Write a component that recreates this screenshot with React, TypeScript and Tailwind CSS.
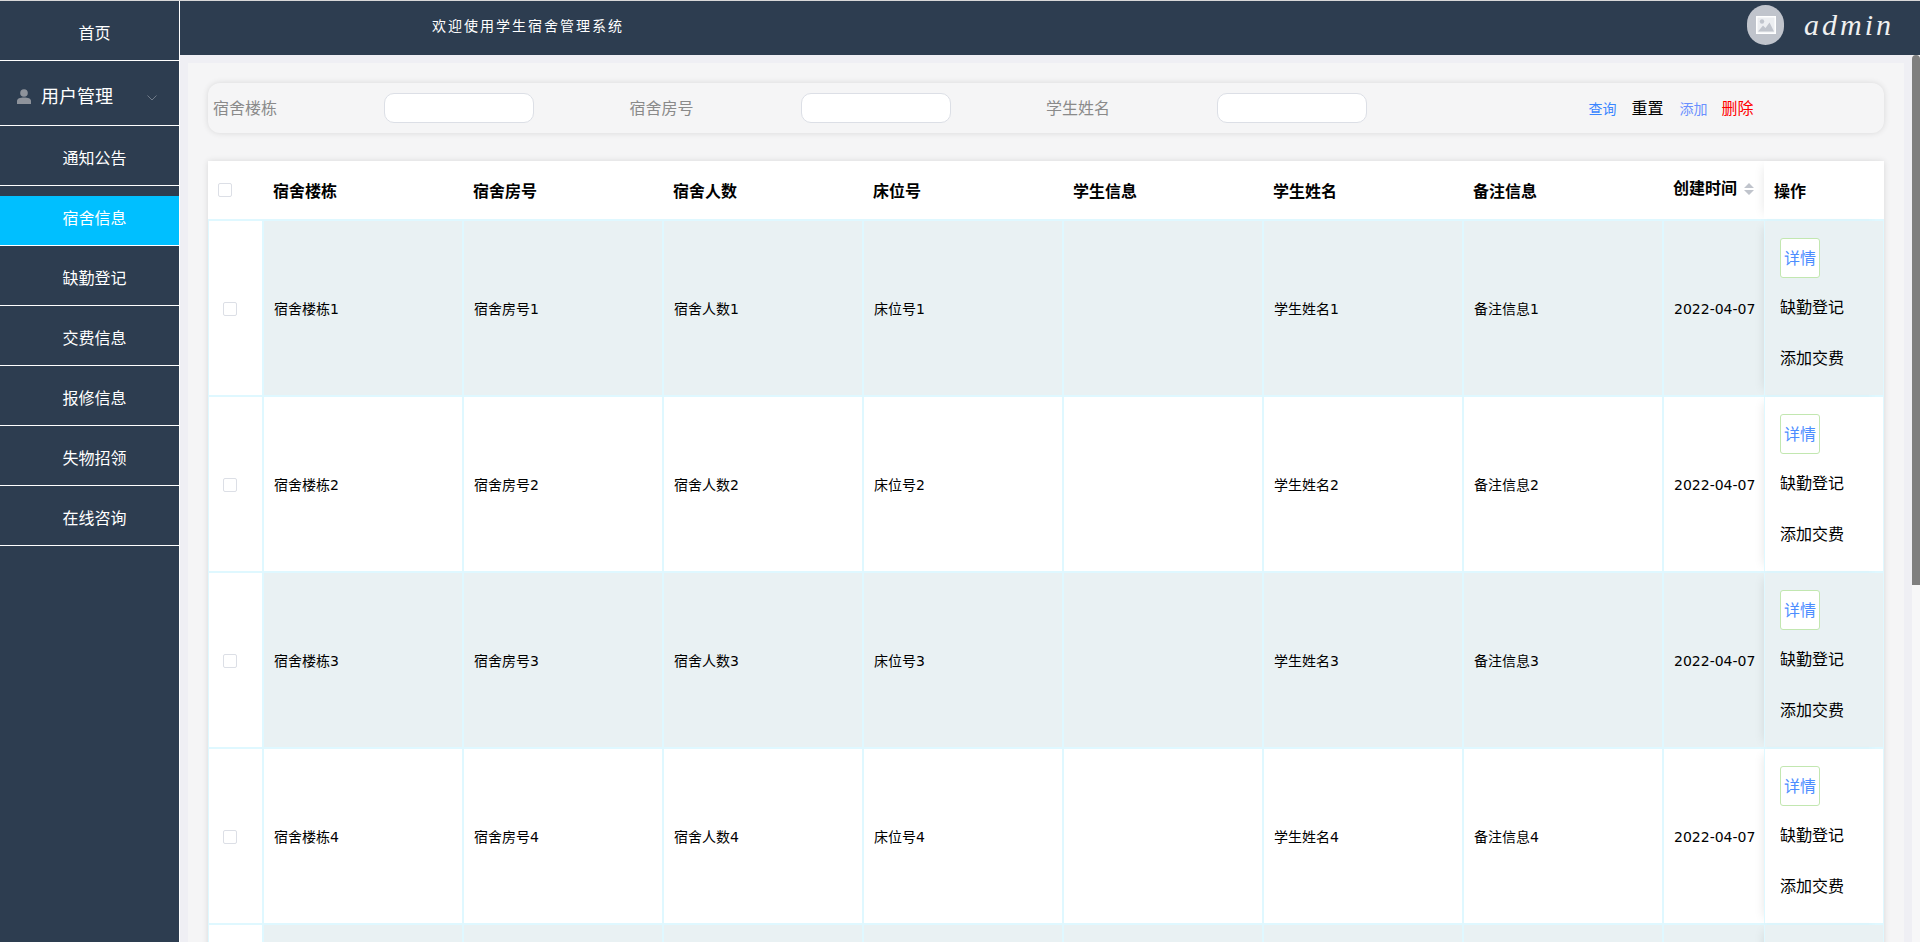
const CN = '"DejaVu Sans","Noto Sans CJK SC",sans-serif';

function NavItem({ label, active, className }: { label: string; active?: boolean; className: string }) {
  return (
    <div className={`flex items-center justify-center border-b border-white pl-[10px] text-base text-white ${active ? "bg-[#00bfff]" : ""} ${className}`}>
      {label}
    </div>
  );
}

function Filter({ label }: { label: string }) {
  return (
    <div className="flex w-[416.5px] items-center">
      <span className="w-[171px] pt-[2px] text-base text-[#8a8a8a]">{label}</span>
      <div className="h-[30px] w-[150px] rounded-[10px] border border-[#dcdfe6] bg-white" />
    </div>
  );
}

function Box() {
  return <div className="h-[14px] w-[14px] rounded-[2px] border border-[#dcdfe6] bg-white" />;
}

const heads = ["宿舍楼栋", "宿舍房号", "宿舍人数", "床位号", "学生信息", "学生姓名", "备注信息"];

function Row({ n, empty }: { n: number; empty?: boolean }) {
  const odd = n % 2 === 1;
  const bg = odd ? "bg-[#e9f1f3]" : "bg-white";
  const vals = empty
    ? ["", "", "", "", "", "", ""]
    : [`宿舍楼栋${n}`, `宿舍房号${n}`, `宿舍人数${n}`, `床位号${n}`, "", `学生姓名${n}`, `备注信息${n}`];
  return (
    <div className="flex h-[176px] shrink-0 border-t-2 border-[#dff8ff]">
      <div className="flex w-[56px] shrink-0 items-center border-l border-r-2 border-[#dff8ff] bg-white pl-[14px] pt-[2px]">
        {!empty && <Box />}
      </div>
      {vals.map((v, i) => (
        <div key={i} className={`flex w-[200px] shrink-0 items-center border-r-2 border-[#dff8ff] pl-[10px] pt-[2px] text-sm text-black ${bg}`}>
          {v}
        </div>
      ))}
      <div className={`flex w-[100px] shrink-0 items-center whitespace-nowrap pl-[10px] pt-[2px] text-sm text-black ${bg}`}>{empty ? "" : "2022-04-07"}</div>
      <div className={`relative flex w-[120px] shrink-0 flex-col items-start border-x border-[#dff8ff] pl-[15px] pt-[17px] text-base text-black shadow-[-6px_0_10px_-6px_rgba(0,0,0,0.10)] ${bg}`}>
        {!empty && (
          <>
            <div className="flex h-10 w-10 items-center justify-center rounded-[3px] border border-[#c2e7b0] bg-white pt-[2px] text-[#4c8dff]">详情</div>
            <div className="mt-[18px] leading-[24px]">缺勤登记</div>
            <div className="mt-[27px] leading-[24px]">添加交费</div>
          </>
        )}
      </div>
    </div>
  );
}

export default function App() {
  return (
    <div className="flex h-[942px] w-full overflow-hidden border-t border-[#d8d8d8] bg-[#efeff4]" style={{ fontFamily: CN }}>
      <aside className="flex h-full w-[179px] shrink-0 flex-col bg-[#2d3d50]">
        <NavItem label="首页" className="h-[60px] pt-[6px]" />
        <div className="relative flex h-[65px] items-center border-b border-white pl-[41px] pt-[7px] text-[18px] text-white">
          <svg viewBox="0 0 14 15" className="absolute left-[17px] top-[28px] h-[15px] w-[14px]" fill="#8e939b">
            <circle cx="7" cy="4" r="3.800" />
            <path d="M0 15v-3C0 9.500 3 8.500 7 8.500s7 1 7 3.500v3z" />
          </svg>
          用户管理
          <svg viewBox="0 0 10 6" className="absolute left-[147px] top-[34px] h-[6px] w-[10px]" fill="none" stroke="#6f7a88" strokeWidth="1">
            <path d="M0.500 0.500 5 5l4.500-4.500" />
          </svg>
        </div>
        <NavItem label="通知公告" className="h-[60px] pt-[7px]" />
        <NavItem label="宿舍信息" active className="mt-[10px] h-[50px] pb-[4px]" />
        {["缺勤登记", "交费信息", "报修信息", "失物招领", "在线咨询"].map((l) => (
          <NavItem key={l} label={l} className="h-[60px] pt-[7px]" />
        ))}
      </aside>
      <div className="flex min-w-0 flex-1 flex-col border-l border-white">
        <header className="relative flex h-[54px] shrink-0 items-center bg-[#2d3d50]">
          <span className="ml-[252px] -mt-[5px] text-[14px] tracking-[2px] text-white" style={{ fontFamily: '"Noto Sans CJK SC",sans-serif' }}>
            欢迎使用学生宿舍管理系统
          </span>
          <div className="absolute left-[1567px] top-[4px] flex h-10 w-[37px] items-center justify-center rounded-full bg-[#c0c4cc]">
            <svg viewBox="0 0 20 18" className="h-[18px] w-5">
              <rect width="20" height="18" fill="#fff" />
              <rect x="1.500" y="1.500" width="17" height="15" fill="#eceef1" />
              <circle cx="6" cy="5.500" r="2.200" fill="#c0c4cc" />
              <path d="M2 15.500l5-6 2.500 2.500 4-5.500 4.500 9z" fill="#c0c4cc" />
            </svg>
          </div>
          <span className="absolute left-[1624px] top-[6px] text-[30px] leading-[36px] tracking-[3px] text-[#f0f0f0] italic" style={{ fontFamily: '"Liberation Serif",cursive' }}>
            admin
          </span>
        </header>
        <div className="flex min-h-0 flex-1">
          <main className="ml-[8px] mt-[8px] min-w-0 flex-1 overflow-hidden bg-[#f5f5f6]">
            <div className="mx-[20px] mt-[20px] flex h-[50px] w-[1676px] items-center rounded-[12px] bg-[#f5f5f6] pl-[5px] shadow-[0_0_6px_rgba(0,0,0,0.12)]">
              <Filter label="宿舍楼栋" />
              <Filter label="宿舍房号" />
              <Filter label="学生姓名" />
              <div className="ml-[126px] flex items-center pt-[2px]">
                <span className="text-sm text-[#3a86ff]">查询</span>
                <span className="ml-[15px] text-base text-black">重置</span>
                <span className="ml-[16px] text-sm text-[#6a90ff]">添加</span>
                <span className="ml-[14px] text-base text-[#ff0000]">删除</span>
              </div>
            </div>
            <div className="mx-[20px] mt-[28px] w-[1676px] shadow-[0_0_6px_rgba(0,0,0,0.12)]">
              <div className="flex h-[58px] bg-white text-base font-bold text-black">
                <div className="flex w-[65px] shrink-0 items-center pl-[10px]">
                  <Box />
                </div>
                {heads.map((h) => (
                  <div key={h} className="flex w-[200px] shrink-0 items-center pt-[3px]">
                    {h}
                  </div>
                ))}
                <div className="flex w-[91px] shrink-0 items-center">
                  <span className="-mt-[3px]">创建时间</span>
                  <svg viewBox="0 0 10 12" className="ml-[7px] -mt-[3px] h-3 w-[10px]" fill="#c0c4cc">
                    <path d="M5 0l5 5H0zM5 12l5-5H0z" />
                  </svg>
                </div>
                <div className="relative flex flex-1 items-center bg-white pl-[10px] pt-[3px] shadow-[-6px_0_10px_-6px_rgba(0,0,0,0.10)]">操作</div>
              </div>
              {[1, 2, 3, 4].map((n) => (
                <Row key={n} n={n} />
              ))}
              <Row n={5} empty />
            </div>
          </main>
          <div className="ml-[8px] h-full w-[8px] shrink-0 bg-[#f7f7f8]">
            <div className="h-[530px] w-[8px] rounded-t-[4px] bg-[#7f7f7f]" />
          </div>
        </div>
      </div>
    </div>
  );
}
